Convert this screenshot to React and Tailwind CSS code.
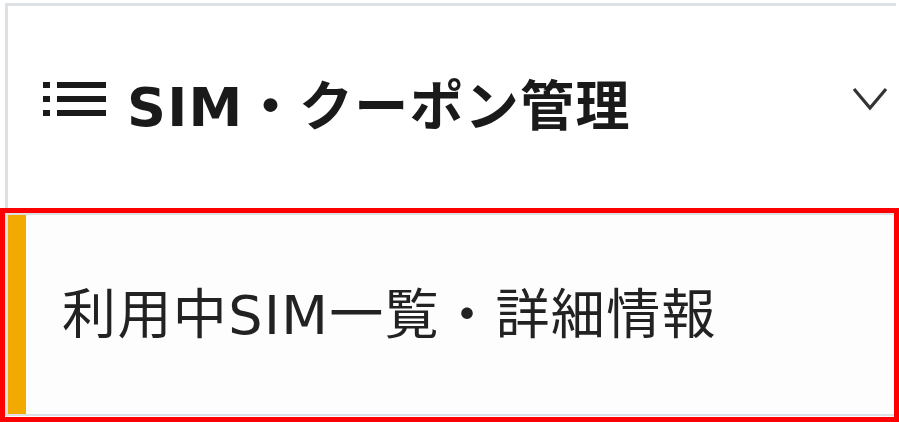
import React from 'react';

const fontStack = '"DejaVu Sans", "Noto Sans CJK JP", sans-serif';

function ListIcon() {
  return (
    <svg width="63" height="35" viewBox="0 0 63 35" className="shrink-0">
      <rect x="0" y="0" width="7" height="6" fill="#1a1a1a" />
      <rect x="14" y="0" width="49" height="6" fill="#1a1a1a" />
      <rect x="0" y="14" width="7" height="6" fill="#1a1a1a" />
      <rect x="14" y="14" width="49" height="6" fill="#1a1a1a" />
      <rect x="0" y="28" width="7" height="6" fill="#1a1a1a" />
      <rect x="14" y="28" width="49" height="6" fill="#1a1a1a" />
    </svg>
  );
}

function Chevron() {
  return (
    <svg width="36" height="26" viewBox="0 0 36 26" className="shrink-0">
      <path d="M2 2 L18 21 L34 2" fill="none" stroke="#333" strokeWidth="3.2" />
    </svg>
  );
}

export default function App() {
  return (
    <div className="relative w-[899px] h-[422px] bg-white overflow-hidden" style={{ fontFamily: fontStack }}>
      <div className="ml-[5px] mt-[3px] w-[891px] border-t-[3px] border-l-[3px] border-[#dde0e4]">
        {/* section header */}
        <div className="h-[207px] flex items-center pl-[35px] pr-[8px] pb-[4px]">
          <div className="mb-[16px]">
            <ListIcon />
          </div>
          <h2 className="ml-[21px] text-[54px] leading-none font-bold tracking-[1.3px] text-[#1a1a1a] whitespace-nowrap">
            SIM・クーポン管理
          </h2>
          <div className="ml-auto mb-[16px]">
            <Chevron />
          </div>
        </div>

        {/* active menu item */}
        <div className="h-[203px] flex border-t-2 border-b-2 border-[#dcdfe3] bg-[#fdfdfd]">
          <div className="w-[18px] bg-[#f2aa00]" />
          <div className="flex items-center pl-[36px] pt-[2px] text-[54px] leading-none tracking-[1.4px] text-[#222] whitespace-nowrap">
            利用中SIM一覧・詳細情報
          </div>
        </div>
      </div>

      {/* highlight frame */}
      <div className="absolute left-0 top-[208px] w-[899px] h-[214px] border-[5px] border-[#ff0000] pointer-events-none" />
    </div>
  );
}
